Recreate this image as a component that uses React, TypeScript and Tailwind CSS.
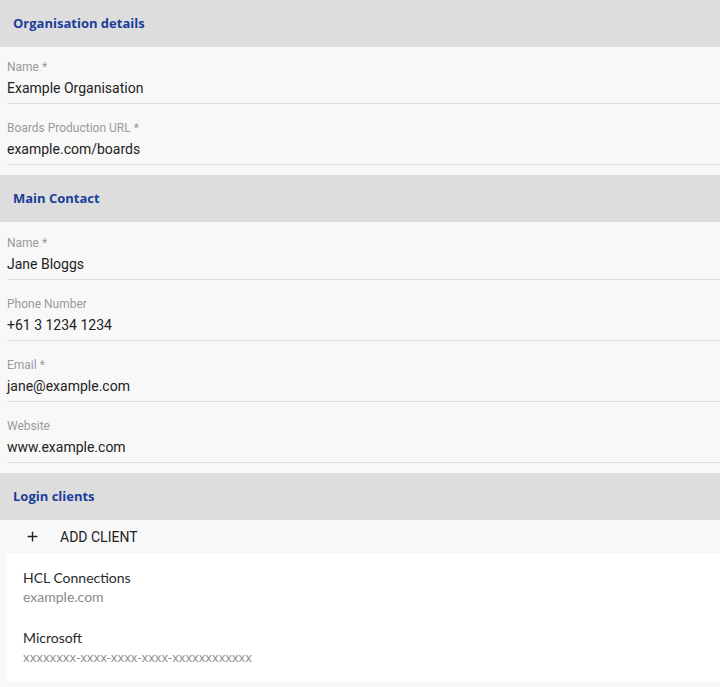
import { Plus } from 'lucide-react';

const roboto = "font-['Roboto','Liberation_Sans',sans-serif]";
const openSans = "font-['Open_Sans','Liberation_Sans',sans-serif]";
const lato = "font-['Lato','Open_Sans',sans-serif]";

type Field = { label: string; value: string };

const orgFields: Field[] = [
  { label: 'Name *', value: 'Example Organisation' },
  { label: 'Boards Production URL *', value: 'example.com/boards' },
];

const contactFields: Field[] = [
  { label: 'Name *', value: 'Jane Bloggs' },
  { label: 'Phone Number', value: '+61 3 1234 1234' },
  { label: 'Email *', value: 'jane@example.com' },
  { label: 'Website', value: 'www.example.com' },
];

const clients = [
  { name: 'HCL Connections', detail: 'example.com', small: false },
  { name: 'Microsoft', detail: 'xxxxxxxx-xxxx-xxxx-xxxx-xxxxxxxxxxxx', small: true },
];

const SectionHeader = ({ title }: { title: string }) => (
  <div className="h-[47px] bg-[#dddddd] flex items-center px-[13px]">
    <h2 className={`${openSans} text-[13px] font-bold text-[#1a3e9b]`}>{title}</h2>
  </div>
);

const FieldList = ({ fields, firstPad }: { fields: Field[]; firstPad: string }) => (
  <div className="pl-[7px] pb-[10px]">
    {fields.map((f, i) => (
      <div
        key={f.label}
        className={`${i === 0 ? firstPad : 'pt-4'} pb-[5px] border-b border-[#dcdcdc] ${roboto}`}
      >
        <div className="text-xs leading-4 text-[#9a9a9a]">{f.label}</div>
        <div className="mt-[3px] text-sm leading-5 text-[#222]">{f.value}</div>
      </div>
    ))}
  </div>
);

export default function App() {
  return (
    <div className="min-h-screen bg-[#f8f8f8] pb-[6px]">
      <SectionHeader title="Organisation details" />
      <FieldList fields={orgFields} firstPad="pt-[12px]" />

      <SectionHeader title="Main Contact" />
      <FieldList fields={contactFields} firstPad="pt-[13px]" />

      <SectionHeader title="Login clients" />
      <button className={`h-[33px] flex items-center pl-[25px] gap-[20px] ${roboto} text-sm text-[#222]`}>
        <Plus size={15} strokeWidth={2.2} className="text-[#222]" />
        <span>ADD CLIENT</span>
      </button>
      <div className="ml-[7px] bg-white pt-[15px] pb-4 pl-4 flex flex-col gap-[22px]">
        {clients.map((c) => (
          <div key={c.name}>
            <div className={`${lato} text-sm leading-5 text-[#2a2a2a]`}>{c.name}</div>
            <div
              className={`${c.small ? `${openSans} text-[12.7px]` : `${lato} text-sm`} leading-[18px] text-[#8a8a8a]`}
            >
              {c.detail}
            </div>
          </div>
        ))}
      </div>
    </div>
  );
}
